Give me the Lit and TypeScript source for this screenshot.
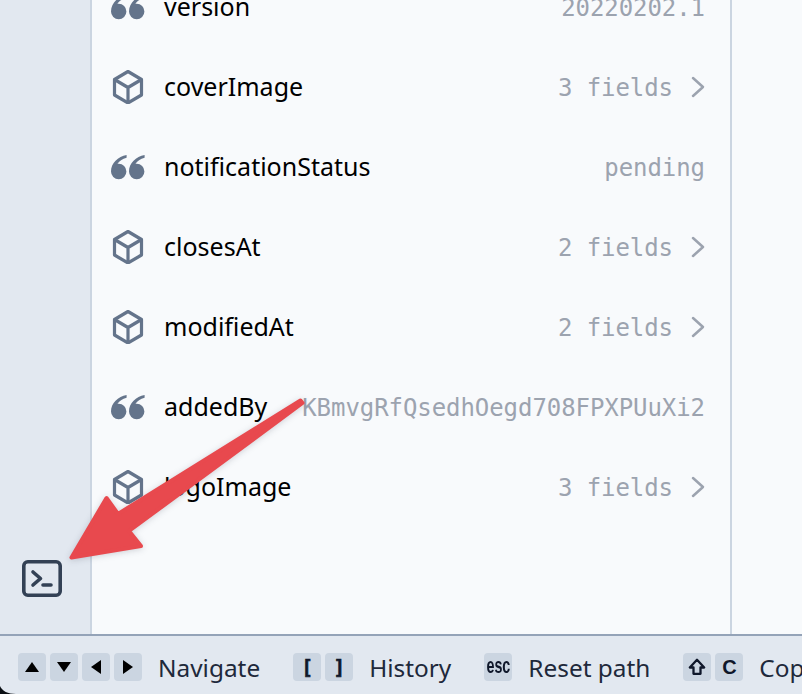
import { LitElement, html, css, svg } from 'lit';
import { customElement } from 'lit/decorators.js';

interface Field {
  kind: 'string' | 'object';
  name: string;
  value: string;
}

const FIELDS: Field[] = [
  { kind: 'string', name: 'version', value: '20220202.1' },
  { kind: 'object', name: 'coverImage', value: '3 fields' },
  { kind: 'string', name: 'notificationStatus', value: 'pending' },
  { kind: 'object', name: 'closesAt', value: '2 fields' },
  { kind: 'object', name: 'modifiedAt', value: '2 fields' },
  { kind: 'string', name: 'addedBy', value: 'KBmvgRfQsedhOegd708FPXPUuXi2' },
  { kind: 'object', name: 'logoImage', value: '3 fields' },
];

const quoteIcon = html`<svg class="icon" width="34" height="34" viewBox="0 0 34 34">
  <path fill="#64748b" d="M15.6 5 C7 6.5 0 13 0 21.5 A7.7 7.7 0 1 0 7.7 13.8 C7.2 13.8 6.8 13.8 6.4 13.9 C8 11.2 11.5 8.8 15.6 7.8 Z" />
  <path fill="#64748b" d="M33.6 5 C25 6.5 18 13 18 21.5 A7.7 7.7 0 1 0 25.7 13.8 C25.2 13.8 24.8 13.8 24.4 13.9 C26 11.2 29.5 8.8 33.6 7.8 Z" />
</svg>`;

const cubeIcon = html`<svg class="icon" width="34" height="34" viewBox="0 0 34 34" fill="none" stroke="#64748b" stroke-width="3.2" stroke-linejoin="round">
  <path d="M17 1.5 L30.5 9.5 V25 L17 33 L3.500 25 V9.5 Z" />
  <path d="M3.500 9.5 L17 17.5 L30.5 9.5 M17 17.5 V33" />
</svg>`;

const chevron = html`<svg class="chevron" width="14" height="22" viewBox="0 0 14 22" fill="none" stroke="#9ca3af" stroke-width="2.5" stroke-linecap="round" stroke-linejoin="round">
  <path d="M2 2 L12 11 L2 20" />
</svg>`;

const tri = (points: string) => html`<svg width="14" height="14" viewBox="0 0 14 14">
  ${svg`<polygon fill="#000" points=${points} />`}
</svg>`;

const shiftIcon = html`<svg width="18" height="18" viewBox="0 0 18 18" fill="none" stroke="#0f172a" stroke-width="2.3" stroke-linejoin="round">
  <path d="M9 1.800 L16.200 9.500 H12.500 V15.800 H5.500 V9.500 H1.800 Z" />
</svg>`;

@customElement('app-root')
export class AppRoot extends LitElement {
  static override styles = css`
    :host {
      display: block;
      position: relative;
      width: 802px;
      height: 694px;
      overflow: hidden;
      font-family: 'Noto Sans', sans-serif;
      background: #f8fafc;
    }

    .main {
      display: flex;
      height: 634px;
      overflow: hidden;
    }

    .rail {
      width: 68px;
      flex: none;
      background: #e2e8f0;
      border-right: 2px solid #cbd5e1;
      display: flex;
      flex-direction: column;
      justify-content: flex-end;
      align-items: flex-start;
      padding: 0 0 37px 22px;
    }

    .panel {
      width: 638px;
      flex: none;
      border-right: 2px solid #cbd5e1;
      margin-top: -32px;
    }

    .row {
      display: flex;
      align-items: center;
      height: 80px;
      padding: 0 25px 0 19px;
    }

    .icon {
      flex: none;
      margin-right: 19px;
      margin-bottom: 3px;
    }

    .name {
      font-size: 25px;
      color: #000;
      white-space: nowrap;
      margin-bottom: 4px;
    }

    .value {
      margin-left: auto;
      font-family: 'DejaVu Sans Mono', monospace;
      font-size: 24px;
      color: #9ca3af;
      white-space: nowrap;
      letter-spacing: -0.065px;
    }

    .chevron {
      flex: none;
      margin-left: 18px;
      margin-bottom: 3px;
    }

    .footer {
      display: flex;
      align-items: center;
      box-sizing: border-box;
      height: 60px;
      border-top: 2px solid #94a3b8;
      background: #e2e8f0;
      padding: 4px 0 0 18px;
      white-space: nowrap;
      overflow: hidden;
    }

    .group {
      display: flex;
      align-items: center;
      flex: none;
      margin-right: 33px;
    }

    .keys {
      display: flex;
      gap: 4px;
      margin-right: 16px;
    }

    .key {
      width: 28px;
      height: 28px;
      border-radius: 4px;
      background: #cbd5e1;
      display: flex;
      align-items: center;
      justify-content: center;
      color: #0f172a;
      font-family: 'Liberation Sans', sans-serif;
      font-size: 20px;
      font-weight: 700;
      overflow: hidden;
    }

    .key.mono {
      font-family: 'DejaVu Sans Mono', monospace;
      font-size: 19px;
      -webkit-text-stroke: 0.6px #0f172a;
    }

    .key.esc span {
      font-size: 22px;
      transform: scaleX(0.65);
      margin-top: -3px;
    }

    .label {
      font-size: 24.4px;
      color: #1e293b;
    }

    .arrow {
      position: absolute;
      left: 0;
      top: 0;
      pointer-events: none;
      filter: drop-shadow(0 1px 3px rgba(15, 23, 42, 0.18));
    }

    .corner {
      position: absolute;
      left: 0;
      bottom: 0;
    }
  `;

  private renderRow(f: Field) {
    const isObject = f.kind === 'object';
    return html`
      <div class="row">
        ${isObject ? cubeIcon : quoteIcon}
        <span class="name">${f.name}</span>
        <span class="value">${f.value}</span>
        ${isObject ? chevron : ''}
      </div>
    `;
  }

  override render() {
    return html`
      <div class="main">
        <div class="rail">
          <svg width="40" height="37" viewBox="0 0 40 37" fill="none" stroke="#334155" stroke-width="3.6" stroke-linecap="round" stroke-linejoin="round">
            <rect x="1.800" y="1.800" width="36.400" height="33.400" rx="4" />
            <path d="M11 12 L18.500 18.500 L11 25 M21 25 H29" />
          </svg>
        </div>
        <div class="panel">${FIELDS.map((f) => this.renderRow(f))}</div>
      </div>
      <div class="footer">
        <div class="group">
          <div class="keys">
            <span class="key">${tri('7,2 14,12 0,12')}</span>
            <span class="key">${tri('0,2 14,2 7,12')}</span>
            <span class="key">${tri('2,7 12,0 12,14')}</span>
            <span class="key">${tri('2,0 12,7 2,14')}</span>
          </div>
          <span class="label">Navigate</span>
        </div>
        <div class="group">
          <div class="keys">
            <span class="key mono">[</span>
            <span class="key mono">]</span>
          </div>
          <span class="label">History</span>
        </div>
        <div class="group">
          <div class="keys"><span class="key esc"><span>esc</span></span></div>
          <span class="label">Reset path</span>
        </div>
        <div class="group">
          <div class="keys">
            <span class="key">${shiftIcon}</span>
            <span class="key">C</span>
          </div>
          <span class="label">Copy</span>
        </div>
      </div>
      <svg class="arrow" width="802" height="694" viewBox="0 0 802 694">
        <path fill="#e8494e" stroke="#e8494e" stroke-width="4" stroke-linejoin="round"
          d="M300.500 400.500 L118 514 L106.500 498 L71.500 557.500 L141 546 L129 531 L302.500 403 Z" />
      </svg>
      <svg class="corner" width="18" height="8" viewBox="0 0 18 8">
        <path fill="#0b0f14" d="M0 0 C2 5 8 8 16 8 H0 Z" />
      </svg>
    `;
  }
}

declare global {
  interface HTMLElementTagNameMap {
    'app-root': AppRoot;
  }
}
